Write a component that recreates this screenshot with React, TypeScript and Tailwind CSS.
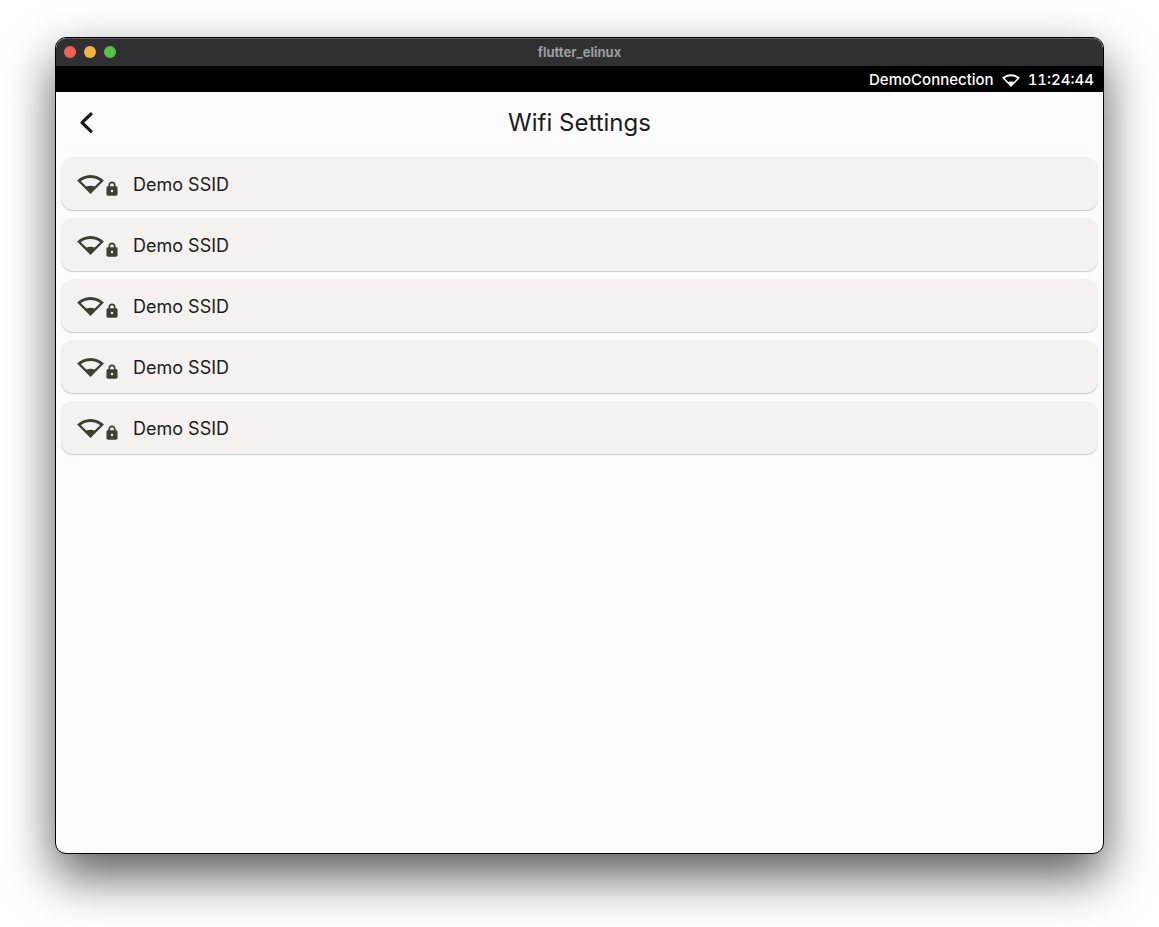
const networks = [
  { id: 1, ssid: 'Demo SSID' },
  { id: 2, ssid: 'Demo SSID' },
  { id: 3, ssid: 'Demo SSID' },
  { id: 4, ssid: 'Demo SSID' },
  { id: 5, ssid: 'Demo SSID' },
];

function WifiIcon({ className }: { className: string }) {
  return (
    <svg viewBox="0 4 24 17" fill="currentColor" fillRule="evenodd" className={className} aria-hidden="true">
      <path d="M24 8.98C20.93 5.9 16.69 4 12 4S3.07 5.9 0 8.98L12 21 24 8.98zM3.4 9.5C5.9 7.7 8.8 6.7 12 6.7s6.1 1 8.6 2.8l-4.900 4.900C14.6 13.9 13.4 13.7 12 13.7s-2.600.2-3.700.7z" />
    </svg>
  );
}

function LockIcon() {
  return (
    <svg viewBox="0 0 24 24" fill="currentColor" className="size-4" aria-hidden="true">
      <path d="M18 8h-.6V6.200c0-3-2.400-5.400-5.400-5.400S6.600 3.200 6.600 6.200V8H6c-1.300 0-2.300.9-2.300 2v10c0 1.100 1 2 2.300 2h12c1.300 0 2.300-.9 2.300-2V10c0-1.100-1-2-2.300-2zm-6 8.800a1.800 1.800 0 1 1 0-3.600 1.800 1.800 0 0 1 0 3.600zM9.200 8V6.200c0-1.600 1.200-2.800 2.800-2.800s2.800 1.200 2.800 2.800V8z" />
    </svg>
  );
}

export default function App() {
  return (
    <div className="flex h-screen flex-col bg-white px-[55px] pt-[37px] pb-[73px] font-['Inter',sans-serif]">
      <div className="flex flex-1 flex-col overflow-hidden rounded-[11px] border border-black bg-[#fdfbff] shadow-[0_22px_50px_rgba(0,0,0,0.65)]">
        <header className="grid h-7 shrink-0 grid-cols-[1fr_auto_1fr] items-center rounded-t-[10px] bg-[#303032] px-2 pb-px shadow-[inset_0_1px_0_#5c5c5e]">
          <div className="flex gap-2">
            <button type="button" aria-label="Close" className="size-3 rounded-full bg-[#ec6158]" />
            <button type="button" aria-label="Minimize" className="size-3 rounded-full bg-[#f4b642]" />
            <button type="button" aria-label="Zoom" className="size-3 rounded-full bg-[#57c146]" />
          </div>
          <span className="text-[13px] leading-4 font-bold text-[#9c9c9e]">flutter_elinux</span>
        </header>
        <div className="flex h-[26px] shrink-0 items-center justify-end gap-2 bg-black px-[9px] pt-0.5 text-[15px] leading-6 font-medium text-white">
          <span>DemoConnection</span>
          <WifiIcon className="h-[13px] w-[18px]" />
          <time className="tabular-nums">11:24:44</time>
        </div>
        <main className="px-[5px]">
          <div className="grid h-[65px] grid-cols-[1fr_auto_1fr] items-start px-1.5 pt-2">
            <button type="button" aria-label="Back" className="flex h-11 w-10 items-center justify-center text-[#1c1c19]">
              <svg viewBox="0 0 24 24" className="size-6" fill="none" stroke="currentColor" strokeWidth="3.2" strokeLinecap="round" strokeLinejoin="round" aria-hidden="true">
                <path d="M16 4 7 12.700l9 8.700" />
              </svg>
            </button>
            <h1 className="text-2xl leading-[45px] text-[#1c1c19]">Wifi Settings</h1>
          </div>
          <ul className="flex flex-col gap-2">
            {networks.map((network) => (
              <li key={network.id}>
                <button
                  type="button"
                  className="flex h-[53px] w-full items-center rounded-xl bg-[#f4f1f0] px-4 pt-0.5 text-left shadow-[0_1px_1px_rgba(0,0,0,0.2)]"
                >
                  <span className="flex items-end pt-0.5 text-[#403e32]">
                    <WifiIcon className="mb-[3px] h-[19px] w-[27px]" />
                    <LockIcon />
                  </span>
                  <span className="pl-[13px] text-lg leading-6 text-[#1c1c19]">{network.ssid}</span>
                </button>
              </li>
            ))}
          </ul>
        </main>
      </div>
    </div>
  );
}
